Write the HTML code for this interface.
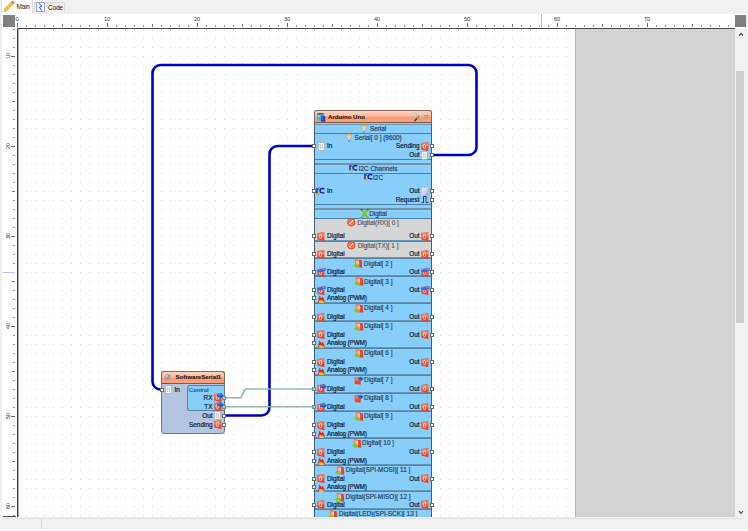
<!DOCTYPE html><html><head><meta charset="utf-8"><style>
html,body{margin:0;padding:0;width:748px;height:531px;overflow:hidden;background:#f0f0f0;font-family:"Liberation Sans",sans-serif;}
.a{position:absolute;}
.t{position:absolute;white-space:nowrap;line-height:10px;height:10px;-webkit-text-stroke:0.2px currentColor;}
svg{position:absolute;overflow:visible;}
</style></head><body>
<div class="a" style="left:2px;top:14px;width:744px;height:503px;background:#fff;"></div>
<div class="a" style="left:1px;top:0px;width:32px;height:14px;background:#fff;border-right:1px solid #dcdcdc;border-left:1px solid #e6e6e6;box-sizing:border-box;"></div>
<div class="a" style="left:34px;top:2px;width:31px;height:11px;background:#f0f0f0;border:1px solid #dcdcdc;border-bottom:none;box-sizing:border-box;"></div>
<div class="t" style="left:16.5px;top:1.5px;font-size:6.6px;color:#1a1a1a;letter-spacing:-0.25px;-webkit-text-stroke:0px currentColor;">Main</div>
<div class="t" style="left:48px;top:2.5px;font-size:6.6px;color:#1a1a1a;letter-spacing:-0.25px;-webkit-text-stroke:0px currentColor;">Code</div>
<svg style="left:3px;top:0px" width="12" height="12" viewBox="0 0 12 12"><path d="M1.2 9.2 L8.6 1.8 L10.6 3.8 L3.2 11.2 Z" fill="#f5c842" stroke="#c88a2a" stroke-width="0.7"/><path d="M8.6 1.8 L9.6 0.8 L11.6 2.8 L10.6 3.8 Z" fill="#e8806a" stroke="#c06050" stroke-width="0.5"/><path d="M1.2 9.2 L3.2 11.2 L0.6 11.8 Z" fill="#f3dcb8" stroke="#c8a070" stroke-width="0.4"/></svg>
<svg style="left:36px;top:2px" width="9" height="10" viewBox="0 0 9 10"><rect x="0.5" y="0.5" width="8" height="9" fill="#eef2fb" stroke="#8a9ab8" stroke-width="0.8"/><path d="M3 1.5 L6 4 L3.5 5 L5.5 8.5" fill="none" stroke="#3060d0" stroke-width="1"/></svg>
<div class="a" style="left:3px;top:15px;width:12px;height:12px;background:#808080;"></div>
<div class="a" style="left:735px;top:15px;width:11px;height:12px;background:#808080;"></div>
<svg style="left:0;top:0" width="748" height="531"><rect x="17" y="23" width="1" height="4" fill="#6a6a6a"/><rect x="26" y="25" width="1" height="2" fill="#999"/><rect x="35" y="25" width="1" height="2" fill="#999"/><rect x="44" y="25" width="1" height="2" fill="#999"/><rect x="53" y="25" width="1" height="2" fill="#999"/><rect x="62" y="24" width="1" height="3" fill="#7a7a7a"/><rect x="71" y="25" width="1" height="2" fill="#999"/><rect x="80" y="25" width="1" height="2" fill="#999"/><rect x="89" y="25" width="1" height="2" fill="#999"/><rect x="98" y="25" width="1" height="2" fill="#999"/><rect x="107" y="23" width="1" height="4" fill="#6a6a6a"/><rect x="116" y="25" width="1" height="2" fill="#999"/><rect x="125" y="25" width="1" height="2" fill="#999"/><rect x="134" y="25" width="1" height="2" fill="#999"/><rect x="143" y="25" width="1" height="2" fill="#999"/><rect x="152" y="24" width="1" height="3" fill="#7a7a7a"/><rect x="161" y="25" width="1" height="2" fill="#999"/><rect x="170" y="25" width="1" height="2" fill="#999"/><rect x="179" y="25" width="1" height="2" fill="#999"/><rect x="188" y="25" width="1" height="2" fill="#999"/><rect x="197" y="23" width="1" height="4" fill="#6a6a6a"/><rect x="206" y="25" width="1" height="2" fill="#999"/><rect x="215" y="25" width="1" height="2" fill="#999"/><rect x="224" y="25" width="1" height="2" fill="#999"/><rect x="233" y="25" width="1" height="2" fill="#999"/><rect x="242" y="24" width="1" height="3" fill="#7a7a7a"/><rect x="251" y="25" width="1" height="2" fill="#999"/><rect x="260" y="25" width="1" height="2" fill="#999"/><rect x="269" y="25" width="1" height="2" fill="#999"/><rect x="278" y="25" width="1" height="2" fill="#999"/><rect x="287" y="23" width="1" height="4" fill="#6a6a6a"/><rect x="296" y="25" width="1" height="2" fill="#999"/><rect x="305" y="25" width="1" height="2" fill="#999"/><rect x="314" y="25" width="1" height="2" fill="#999"/><rect x="323" y="25" width="1" height="2" fill="#999"/><rect x="332" y="24" width="1" height="3" fill="#7a7a7a"/><rect x="341" y="25" width="1" height="2" fill="#999"/><rect x="350" y="25" width="1" height="2" fill="#999"/><rect x="359" y="25" width="1" height="2" fill="#999"/><rect x="368" y="25" width="1" height="2" fill="#999"/><rect x="377" y="23" width="1" height="4" fill="#6a6a6a"/><rect x="386" y="25" width="1" height="2" fill="#999"/><rect x="395" y="25" width="1" height="2" fill="#999"/><rect x="404" y="25" width="1" height="2" fill="#999"/><rect x="413" y="25" width="1" height="2" fill="#999"/><rect x="422" y="24" width="1" height="3" fill="#7a7a7a"/><rect x="431" y="25" width="1" height="2" fill="#999"/><rect x="440" y="25" width="1" height="2" fill="#999"/><rect x="449" y="25" width="1" height="2" fill="#999"/><rect x="458" y="25" width="1" height="2" fill="#999"/><rect x="467" y="23" width="1" height="4" fill="#6a6a6a"/><rect x="476" y="25" width="1" height="2" fill="#999"/><rect x="485" y="25" width="1" height="2" fill="#999"/><rect x="494" y="25" width="1" height="2" fill="#999"/><rect x="503" y="25" width="1" height="2" fill="#999"/><rect x="512" y="24" width="1" height="3" fill="#7a7a7a"/><rect x="521" y="25" width="1" height="2" fill="#999"/><rect x="530" y="25" width="1" height="2" fill="#999"/><rect x="539" y="25" width="1" height="2" fill="#999"/><rect x="548" y="25" width="1" height="2" fill="#999"/><rect x="557" y="23" width="1" height="4" fill="#6a6a6a"/><rect x="566" y="25" width="1" height="2" fill="#999"/><rect x="575" y="25" width="1" height="2" fill="#999"/><rect x="584" y="25" width="1" height="2" fill="#999"/><rect x="593" y="25" width="1" height="2" fill="#999"/><rect x="602" y="24" width="1" height="3" fill="#7a7a7a"/><rect x="611" y="25" width="1" height="2" fill="#999"/><rect x="620" y="25" width="1" height="2" fill="#999"/><rect x="629" y="25" width="1" height="2" fill="#999"/><rect x="638" y="25" width="1" height="2" fill="#999"/><rect x="647" y="23" width="1" height="4" fill="#6a6a6a"/><rect x="656" y="25" width="1" height="2" fill="#999"/><rect x="665" y="25" width="1" height="2" fill="#999"/><rect x="674" y="25" width="1" height="2" fill="#999"/><rect x="683" y="25" width="1" height="2" fill="#999"/><rect x="692" y="24" width="1" height="3" fill="#7a7a7a"/><rect x="701" y="25" width="1" height="2" fill="#999"/><rect x="710" y="25" width="1" height="2" fill="#999"/><rect x="719" y="25" width="1" height="2" fill="#999"/><rect x="728" y="25" width="1" height="2" fill="#999"/><rect x="13" y="29" width="2" height="1" fill="#999"/><rect x="13" y="38" width="2" height="1" fill="#999"/><rect x="13" y="47" width="2" height="1" fill="#999"/><rect x="11" y="56" width="4" height="1" fill="#6a6a6a"/><rect x="13" y="65" width="2" height="1" fill="#999"/><rect x="13" y="74" width="2" height="1" fill="#999"/><rect x="13" y="83" width="2" height="1" fill="#999"/><rect x="13" y="92" width="2" height="1" fill="#999"/><rect x="12" y="101" width="3" height="1" fill="#7a7a7a"/><rect x="13" y="110" width="2" height="1" fill="#999"/><rect x="13" y="119" width="2" height="1" fill="#999"/><rect x="13" y="128" width="2" height="1" fill="#999"/><rect x="13" y="137" width="2" height="1" fill="#999"/><rect x="11" y="146" width="4" height="1" fill="#6a6a6a"/><rect x="13" y="155" width="2" height="1" fill="#999"/><rect x="13" y="164" width="2" height="1" fill="#999"/><rect x="13" y="173" width="2" height="1" fill="#999"/><rect x="13" y="182" width="2" height="1" fill="#999"/><rect x="12" y="191" width="3" height="1" fill="#7a7a7a"/><rect x="13" y="200" width="2" height="1" fill="#999"/><rect x="13" y="209" width="2" height="1" fill="#999"/><rect x="13" y="218" width="2" height="1" fill="#999"/><rect x="13" y="227" width="2" height="1" fill="#999"/><rect x="11" y="236" width="4" height="1" fill="#6a6a6a"/><rect x="13" y="245" width="2" height="1" fill="#999"/><rect x="13" y="254" width="2" height="1" fill="#999"/><rect x="13" y="263" width="2" height="1" fill="#999"/><rect x="13" y="272" width="2" height="1" fill="#999"/><rect x="12" y="281" width="3" height="1" fill="#7a7a7a"/><rect x="13" y="290" width="2" height="1" fill="#999"/><rect x="13" y="299" width="2" height="1" fill="#999"/><rect x="13" y="308" width="2" height="1" fill="#999"/><rect x="13" y="317" width="2" height="1" fill="#999"/><rect x="11" y="326" width="4" height="1" fill="#6a6a6a"/><rect x="13" y="335" width="2" height="1" fill="#999"/><rect x="13" y="344" width="2" height="1" fill="#999"/><rect x="13" y="353" width="2" height="1" fill="#999"/><rect x="13" y="362" width="2" height="1" fill="#999"/><rect x="12" y="371" width="3" height="1" fill="#7a7a7a"/><rect x="13" y="380" width="2" height="1" fill="#999"/><rect x="13" y="389" width="2" height="1" fill="#999"/><rect x="13" y="398" width="2" height="1" fill="#999"/><rect x="13" y="407" width="2" height="1" fill="#999"/><rect x="11" y="416" width="4" height="1" fill="#6a6a6a"/><rect x="13" y="425" width="2" height="1" fill="#999"/><rect x="13" y="434" width="2" height="1" fill="#999"/><rect x="13" y="443" width="2" height="1" fill="#999"/><rect x="13" y="452" width="2" height="1" fill="#999"/><rect x="12" y="461" width="3" height="1" fill="#7a7a7a"/><rect x="13" y="470" width="2" height="1" fill="#999"/><rect x="13" y="479" width="2" height="1" fill="#999"/><rect x="13" y="488" width="2" height="1" fill="#999"/><rect x="13" y="497" width="2" height="1" fill="#999"/><rect x="11" y="506" width="4" height="1" fill="#6a6a6a"/><rect x="13" y="515" width="2" height="1" fill="#999"/></svg>
<div class="t" style="left:17px;transform:translateX(-50%);top:14.0px;font-size:5.5px;color:#333;-webkit-text-stroke:0px currentColor;">0</div>
<div class="t" style="left:107px;transform:translateX(-50%);top:14.0px;font-size:5.5px;color:#333;-webkit-text-stroke:0px currentColor;">10</div>
<div class="t" style="left:197px;transform:translateX(-50%);top:14.0px;font-size:5.5px;color:#333;-webkit-text-stroke:0px currentColor;">20</div>
<div class="t" style="left:287px;transform:translateX(-50%);top:14.0px;font-size:5.5px;color:#333;-webkit-text-stroke:0px currentColor;">30</div>
<div class="t" style="left:377px;transform:translateX(-50%);top:14.0px;font-size:5.5px;color:#333;-webkit-text-stroke:0px currentColor;">40</div>
<div class="t" style="left:467px;transform:translateX(-50%);top:14.0px;font-size:5.5px;color:#333;-webkit-text-stroke:0px currentColor;">50</div>
<div class="t" style="left:557px;transform:translateX(-50%);top:14.0px;font-size:5.5px;color:#333;-webkit-text-stroke:0px currentColor;">60</div>
<div class="t" style="left:647px;transform:translateX(-50%);top:14.0px;font-size:5.5px;color:#333;-webkit-text-stroke:0px currentColor;">70</div>
<div class="t" style="left:2.5px;top:51px;width:10px;text-align:center;font-size:5.5px;color:#333;transform:rotate(-90deg);-webkit-text-stroke:0;">10</div>
<div class="t" style="left:2.5px;top:141px;width:10px;text-align:center;font-size:5.5px;color:#333;transform:rotate(-90deg);-webkit-text-stroke:0;">20</div>
<div class="t" style="left:2.5px;top:231px;width:10px;text-align:center;font-size:5.5px;color:#333;transform:rotate(-90deg);-webkit-text-stroke:0;">30</div>
<div class="t" style="left:2.5px;top:321px;width:10px;text-align:center;font-size:5.5px;color:#333;transform:rotate(-90deg);-webkit-text-stroke:0;">40</div>
<div class="t" style="left:2.5px;top:411px;width:10px;text-align:center;font-size:5.5px;color:#333;transform:rotate(-90deg);-webkit-text-stroke:0;">50</div>
<div class="t" style="left:2.5px;top:501px;width:10px;text-align:center;font-size:5.5px;color:#333;transform:rotate(-90deg);-webkit-text-stroke:0;">60</div>
<div class="a" style="left:541px;top:14px;width:1px;height:14px;background:#f0a0a8;"></div>
<div class="a" style="left:3px;top:272px;width:12px;height:1px;background:#c0c0f0;"></div>
<div class="a" style="left:17px;top:28px;width:718px;height:1px;background:#4a4a4a;"></div>
<div class="a" style="left:17px;top:28px;width:1px;height:489px;background:#404040;"></div>
<div class="a" style="left:18px;top:29px;width:1px;height:488px;background:#a8a8a8;"></div>
<div class="a" style="left:3px;top:516px;width:13px;height:1px;background:#505050;"></div>
<svg style="left:18px;top:29px" width="557" height="488"><defs><pattern id="gd" width="9" height="9" patternUnits="userSpaceOnUse" x="8" y="0"><rect x="0" y="0" width="1" height="1" fill="#d6d6d6"/></pattern></defs><rect x="0" y="0" width="557" height="488" fill="url(#gd)"/></svg>
<div class="a" style="left:575px;top:29px;width:160px;height:488px;background:#d3d3d3;border-left:1px solid #b4b4b4;box-sizing:border-box;"></div>
<div class="a" style="left:735px;top:29px;width:11px;height:488px;background:#f0f0f0;"></div>
<div class="a" style="left:736px;top:71px;width:8px;height:252px;background:#cdcdcd;"></div>
<svg style="left:737.5px;top:32px" width="6" height="5" viewBox="0 0 6 5"><path d="M1 3.6 L3 1.4 L5 3.6" fill="none" stroke="#505050" stroke-width="1.1"/></svg>
<div class="a" style="left:745px;top:29px;width:1px;height:488px;background:#fafafa;"></div>
<svg style="left:737.5px;top:510px" width="6" height="5" viewBox="0 0 6 5"><path d="M1 1.2 L3 3.4 L5 1.2" fill="none" stroke="#505050" stroke-width="1.1"/></svg>
<svg style="left:0;top:0" width="748" height="531"><path d="M432 155 H468.5 A8 8 0 0 0 476.5 147 V73 A8 8 0 0 0 468.5 65 H160.5 A8 8 0 0 0 152.5 73 V381.5 A8 8 0 0 0 160.5 389.5 H162" fill="none" stroke="#0000c8" stroke-width="2.6"/><path d="M225 415.5 H261.5 A8 8 0 0 0 269.5 407.5 V154 A8 8 0 0 1 277.5 146 H314" fill="none" stroke="#0000c8" stroke-width="2.6"/><path d="M225 397.8 H239.5 C243.5 397.8 242.5 389 246.5 389 H314" fill="none" stroke="#88b4ac" stroke-width="1.6" stroke-opacity="0.95"/><path d="M225 406.8 H314" fill="none" stroke="#88b4ac" stroke-width="1.6" stroke-opacity="0.95"/></svg>
<div class="a" style="left:314px;top:122px;width:118px;height:400px;background:#87cefa;border-left:1px solid #465e72;border-right:1px solid #465e72;box-sizing:border-box;"></div>
<div class="a" style="left:314px;top:110px;width:118px;height:13px;background:linear-gradient(#fcd2bf 0%,#fbbfa4 40%,#f89c76 60%,#f7a27c 100%);border:1px solid #86685c;border-bottom:1px solid #7a5a4c;border-radius:3px 3px 0 0;box-sizing:border-box;"></div>
<div class="a" style="left:315px;top:124px;width:116px;height:1px;background:#6f98b8;"></div>
<div class="a" style="left:315px;top:133px;width:116px;height:1px;background:#4d82a8;"></div>
<div class="a" style="left:315px;top:159px;width:116px;height:1px;background:#4d82a8;"></div>
<div class="a" style="left:315px;top:173px;width:116px;height:1px;background:#4d82a8;"></div>
<div class="a" style="left:315px;top:204px;width:116px;height:1px;background:#4d82a8;"></div>
<div class="a" style="left:315px;top:218px;width:116px;height:1px;background:#4d82a8;"></div>
<div class="a" style="left:315px;top:163px;width:116px;height:2px;background:#7593a8;"></div>
<div class="a" style="left:315px;top:208px;width:116px;height:2px;background:#7593a8;"></div>
<div class="a" style="left:315px;top:219px;width:116px;height:21px;background:#d5d5d5;"></div>
<div class="a" style="left:315px;top:242px;width:116px;height:15.5px;background:#d5d5d5;"></div>
<div class="a" style="left:315px;top:240.10000000000002px;width:116px;height:2.2px;background:linear-gradient(#6e9cbd,#4f7d9e);"></div>
<div class="a" style="left:315px;top:257.1px;width:116px;height:2.2px;background:linear-gradient(#6e9cbd,#4f7d9e);"></div>
<div class="a" style="left:315px;top:275.1px;width:116px;height:2.2px;background:linear-gradient(#6e9cbd,#4f7d9e);"></div>
<div class="a" style="left:315px;top:301.8px;width:116px;height:2.2px;background:linear-gradient(#6e9cbd,#4f7d9e);"></div>
<div class="a" style="left:315px;top:320.3px;width:116px;height:2.2px;background:linear-gradient(#6e9cbd,#4f7d9e);"></div>
<div class="a" style="left:315px;top:347.1px;width:116px;height:2.2px;background:linear-gradient(#6e9cbd,#4f7d9e);"></div>
<div class="a" style="left:315px;top:373.90000000000003px;width:116px;height:2.2px;background:linear-gradient(#6e9cbd,#4f7d9e);"></div>
<div class="a" style="left:315px;top:392.2px;width:116px;height:2.2px;background:linear-gradient(#6e9cbd,#4f7d9e);"></div>
<div class="a" style="left:315px;top:410.3px;width:116px;height:2.2px;background:linear-gradient(#6e9cbd,#4f7d9e);"></div>
<div class="a" style="left:315px;top:437.0px;width:116px;height:2.2px;background:linear-gradient(#6e9cbd,#4f7d9e);"></div>
<div class="a" style="left:315px;top:463.90000000000003px;width:116px;height:2.2px;background:linear-gradient(#6e9cbd,#4f7d9e);"></div>
<div class="a" style="left:315px;top:490.2px;width:116px;height:2.2px;background:linear-gradient(#6e9cbd,#4f7d9e);"></div>
<div class="a" style="left:315px;top:508.1px;width:116px;height:2.2px;background:linear-gradient(#6e9cbd,#4f7d9e);"></div>
<svg style="left:316px;top:112px" width="10" height="10" viewBox="0 0 10 10"><path d="M0.8 3 C0.8 1.2 2 0.8 4.5 0.8 C7 0.8 8.2 1.2 8.2 3 V6 C8.2 8.5 6 9 4.5 9 C2.5 9 0.8 8.4 0.8 6 Z" fill="#48b8b8"/><path d="M1 2.5 C1 1.2 2.2 1 4.5 1 C7 1 8 1.2 8 2.5 Z" fill="#3a7080"/><path d="M1.6 4 Q3 3.2 4 5" stroke="#a8f0f0" stroke-width="1" fill="none"/><rect x="5.2" y="4.2" width="4" height="5.5" fill="#2a30b8"/><path d="M6.2 5 L7.2 8.5" stroke="#8090ff" stroke-width="0.8"/></svg>
<div class="t" style="left:328px;top:111.5px;font-size:6.1px;color:#2e140a;font-weight:bold;-webkit-text-stroke:0.12px currentColor;">Arduino Uno</div>
<svg style="left:413px;top:111.5px" width="10" height="10" viewBox="0 0 10 10"><path d="M2 8.5 L5.2 5" stroke="#7a3a18" stroke-width="1.8" stroke-linecap="round"/><path d="M4.6 5.6 L8.2 8.4" stroke="#90b8b0" stroke-width="1.8" stroke-linecap="round"/><circle cx="2.6" cy="2.6" r="1.8" fill="none" stroke="#c8d0d0" stroke-width="1.2"/><path d="M3.6 3.6 L5 5" stroke="#b0a090" stroke-width="1"/><circle cx="7.2" cy="2" r="1.3" fill="none" stroke="#d8dcdc" stroke-width="0.9"/><path d="M6.4 2.8 L5 4.4" stroke="#a09088" stroke-width="0.9"/></svg>
<svg style="left:424px;top:114.5px" width="5" height="4" viewBox="0 0 5 4"><path d="M0.6 0.6 L4.4 0.6 L2.5 3.2 Z" fill="#e8d8d0" stroke="#8a8078" stroke-width="0.7"/></svg>
<svg style="left:360.40000000000003px;top:124.0px" width="8" height="9" viewBox="0 0 8 9"><path d="M0.8 1.8 L7.2 1.8 L4.2 8.2 L3.8 8.2 Z" fill="#dcd4dc" stroke="#98a0a8" stroke-width="0.5"/><path d="M4 7 L4 9" stroke="#606870" stroke-width="0.8"/><ellipse cx="4" cy="1.6" rx="2.6" ry="1.1" fill="#ecc848"/><path d="M1.6 1 Q4 -0.2 6.4 1" stroke="#8a5a28" stroke-width="0.6" fill="none"/></svg>
<div class="t" style="left:369.90000000000003px;top:123.5px;font-size:6.4px;color:#1c3a5c;-webkit-text-stroke:0.15px currentColor;">Serial</div>
<svg style="left:344.95px;top:133.0px" width="8" height="9" viewBox="0 0 8 9"><path d="M0.8 1.8 L7.2 1.8 L4.2 8.2 L3.8 8.2 Z" fill="#dcd4dc" stroke="#98a0a8" stroke-width="0.5"/><path d="M4 7 L4 9" stroke="#606870" stroke-width="0.8"/><ellipse cx="4" cy="1.6" rx="2.6" ry="1.1" fill="#ecc848"/><path d="M1.6 1 Q4 -0.2 6.4 1" stroke="#8a5a28" stroke-width="0.6" fill="none"/></svg>
<div class="t" style="left:354.45px;top:132.5px;font-size:6.4px;color:#1c3a5c;-webkit-text-stroke:0.15px currentColor;">Serial[ 0 ] (9600)</div>
<svg style="left:349.2px;top:164.0px" width="9" height="9" viewBox="0 0 9 9"><rect x="0.3" y="1" width="1.4" height="5.5" fill="#1c1ca8"/><text x="1.6" y="3.4" font-family="Liberation Sans" font-weight="bold" font-size="3.6" fill="#3a3ad0">2</text><path d="M8.2 2.2 C7.5 1.2 4 1 4 3.8 C4 6.6 7.5 6.4 8.2 5.4" fill="none" stroke="#1c1ca8" stroke-width="1.5"/><path d="M1.2 6.2 C1.8 4.6 3.6 4.8 4.2 6 C4.6 7.2 3.6 8.6 2.4 8.4 C1.6 8.2 1 7.2 1.2 6.2 Z" fill="#d8b048"/><path d="M4.5 6.5 L6.5 7.5" stroke="#e8e0f0" stroke-width="0.8"/></svg>
<div class="t" style="left:358.7px;top:163.5px;font-size:6.4px;color:#1c3a5c;-webkit-text-stroke:0.15px currentColor;">I2C Channels</div>
<svg style="left:363.55px;top:173.0px" width="9" height="9" viewBox="0 0 9 9"><rect x="0.3" y="1" width="1.4" height="5.5" fill="#1c1ca8"/><text x="1.6" y="3.4" font-family="Liberation Sans" font-weight="bold" font-size="3.6" fill="#3a3ad0">2</text><path d="M8.2 2.2 C7.5 1.2 4 1 4 3.8 C4 6.6 7.5 6.4 8.2 5.4" fill="none" stroke="#1c1ca8" stroke-width="1.5"/><path d="M1.2 6.2 C1.8 4.6 3.6 4.8 4.2 6 C4.6 7.2 3.6 8.6 2.4 8.4 C1.6 8.2 1 7.2 1.2 6.2 Z" fill="#d8b048"/><path d="M4.5 6.5 L6.5 7.5" stroke="#e8e0f0" stroke-width="0.8"/></svg>
<div class="t" style="left:373.05px;top:172.5px;font-size:6.4px;color:#1c3a5c;-webkit-text-stroke:0.15px currentColor;">I2C</div>
<svg style="left:359.65000000000003px;top:209.0px" width="10" height="10" viewBox="0 0 10 10"><path d="M1.4 1 C5.2 3.2 5.2 6.2 1.4 8.5" stroke="#78c020" stroke-width="2" fill="none" stroke-linecap="round"/><path d="M8.2 1 C4.4 3.2 4.4 6.2 8.2 8.5" stroke="#78c020" stroke-width="2" fill="none" stroke-linecap="round"/><path d="M0.6 0.6 h2 M6.8 0.6 h2" stroke="#2a5a10" stroke-width="1"/><path d="M2 3 L2.6 4.5 M7.4 3 L6.8 4.5" stroke="#b8f060" stroke-width="0.6"/></svg>
<div class="t" style="left:369.15000000000003px;top:208.5px;font-size:6.4px;color:#1c3a5c;-webkit-text-stroke:0.15px currentColor;">Digital</div>
<div class="a" style="left:312px;top:144px;width:4px;height:4px;background:#fff;border:1px solid #6a6a6a;box-sizing:border-box;"></div>
<svg style="left:318px;top:141.5px" width="7" height="9" viewBox="0 0 7 9"><rect x="0.5" y="0.5" width="6" height="8" rx="0.8" fill="#f4f4ee" stroke="#a8aca8" stroke-width="0.8"/><path d="M2.6 2 V7 M4.4 2 V7" stroke="#b8b8b0" stroke-width="0.7"/></svg>
<div class="t" style="left:327px;top:141.0px;font-size:6.4px;color:#0e2236;letter-spacing:0px;">In</div>
<div class="a" style="left:430px;top:144px;width:4px;height:4px;background:#fff;border:1px solid #6a6a6a;box-sizing:border-box;"></div>
<svg style="left:420.5px;top:141.5px" width="9" height="9" viewBox="0 0 9 9"><path d="M0.2 0.9 L7.3 0.2 L7.4 9.2 L0.4 7.6 Z" fill="#e9462a"/><path d="M0.5 1.2 L7 0.6 L7 4.2 L0.6 4.6 Z" fill="#f77a5c"/><rect x="2.3" y="2.6" width="2.4" height="3.8" rx="1" fill="none" stroke="#fde0d0" stroke-width="0.9"/></svg>
<div class="t" style="right:328.5px;top:141.0px;font-size:6.4px;color:#0e2236;">Sending</div>
<div class="a" style="left:430px;top:153px;width:4px;height:4px;background:#fff;border:1px solid #6a6a6a;box-sizing:border-box;"></div>
<svg style="left:421px;top:150.5px" width="7" height="9" viewBox="0 0 7 9"><rect x="0.5" y="0.5" width="6" height="8" rx="0.8" fill="#f4f4ee" stroke="#a8aca8" stroke-width="0.8"/><path d="M2.6 2 V7 M4.4 2 V7" stroke="#b8b8b0" stroke-width="0.7"/></svg>
<div class="t" style="right:328.5px;top:150.0px;font-size:6.4px;color:#0e2236;">Out</div>
<div class="a" style="left:312px;top:189px;width:4px;height:4px;background:#fff;border:1px solid #6a6a6a;box-sizing:border-box;"></div>
<svg style="left:316px;top:186.5px" width="9" height="9" viewBox="0 0 9 9"><rect x="0.3" y="1" width="1.4" height="5.5" fill="#1c1ca8"/><text x="1.6" y="3.4" font-family="Liberation Sans" font-weight="bold" font-size="3.6" fill="#3a3ad0">2</text><path d="M8.2 2.2 C7.5 1.2 4 1 4 3.8 C4 6.6 7.5 6.4 8.2 5.4" fill="none" stroke="#1c1ca8" stroke-width="1.5"/><path d="M1.2 6.2 C1.8 4.6 3.6 4.8 4.2 6 C4.6 7.2 3.6 8.6 2.4 8.4 C1.6 8.2 1 7.2 1.2 6.2 Z" fill="#d8b048"/><path d="M4.5 6.5 L6.5 7.5" stroke="#e8e0f0" stroke-width="0.8"/></svg>
<div class="t" style="left:327px;top:186.0px;font-size:6.4px;color:#0e2236;letter-spacing:0px;">In</div>
<div class="a" style="left:430px;top:189px;width:4px;height:4px;background:#fff;border:1px solid #6a6a6a;box-sizing:border-box;"></div>
<svg style="left:421px;top:186.5px" width="8" height="9" viewBox="0 0 8 9"><defs><linearGradient id="og" x1="0" y1="0" x2="1" y2="1"><stop offset="0" stop-color="#f4f6f8"/><stop offset="0.6" stop-color="#c8d4e0"/><stop offset="1" stop-color="#7a9ac0"/></linearGradient></defs><rect x="0.3" y="0.3" width="7" height="8" fill="url(#og)" stroke="#b0bcc8" stroke-width="0.5"/></svg>
<div class="t" style="right:328.5px;top:186.0px;font-size:6.4px;color:#0e2236;">Out</div>
<div class="a" style="left:430px;top:197.5px;width:4px;height:4px;background:#fff;border:1px solid #6a6a6a;box-sizing:border-box;"></div>
<svg style="left:421px;top:195.0px" width="8" height="9" viewBox="0 0 8 9"><path d="M0.5 7.5 H2.5 V1.5 H5 V7.5 H7.5" fill="none" stroke="#203040" stroke-width="0.9"/></svg>
<div class="t" style="right:328.5px;top:194.5px;font-size:6.4px;color:#0e2236;">Request</div>
<svg style="left:346.75px;top:218.0px" width="9" height="9" viewBox="0 0 9 9"><circle cx="4.3" cy="4.3" r="4.1" fill="#e4502e"/><circle cx="4.3" cy="4.3" r="2.4" fill="none" stroke="#f8b8a0" stroke-width="0.7"/><path d="M2.4 6.2 L6.2 2.4" stroke="#fff0e8" stroke-width="1.1"/></svg>
<div class="t" style="left:357.25px;top:217.5px;font-size:6.4px;color:#50555c;-webkit-text-stroke:0.15px currentColor;">Digital(RX)[ 0 ]</div>
<div class="a" style="left:312px;top:234px;width:4px;height:4px;background:#fff;border:1px solid #6a6a6a;box-sizing:border-box;"></div>
<svg style="left:317px;top:231.5px" width="9" height="9" viewBox="0 0 9 9"><path d="M0.2 0.9 L7.3 0.2 L7.4 9.2 L0.4 7.6 Z" fill="#e9462a"/><path d="M0.5 1.2 L7 0.6 L7 4.2 L0.6 4.6 Z" fill="#f77a5c"/><rect x="2.3" y="2.6" width="2.4" height="3.8" rx="1" fill="none" stroke="#fde0d0" stroke-width="0.9"/></svg>
<div class="t" style="left:327px;top:231.0px;font-size:6.4px;color:#0e2236;letter-spacing:0px;">Digital</div>
<div class="a" style="left:430px;top:234px;width:4px;height:4px;background:#fff;border:1px solid #6a6a6a;box-sizing:border-box;"></div>
<svg style="left:420.5px;top:231.5px" width="9" height="9" viewBox="0 0 9 9"><path d="M0.2 0.9 L7.3 0.2 L7.4 9.2 L0.4 7.6 Z" fill="#e9462a"/><path d="M0.5 1.2 L7 0.6 L7 4.2 L0.6 4.6 Z" fill="#f77a5c"/><rect x="2.3" y="2.6" width="2.4" height="3.8" rx="1" fill="none" stroke="#fde0d0" stroke-width="0.9"/></svg>
<div class="t" style="right:328.5px;top:231.0px;font-size:6.4px;color:#0e2236;">Out</div>
<svg style="left:347.15000000000003px;top:241.0px" width="9" height="9" viewBox="0 0 9 9"><circle cx="4.3" cy="4.3" r="4.1" fill="#e4502e"/><circle cx="4.3" cy="4.3" r="2.4" fill="none" stroke="#f8b8a0" stroke-width="0.7"/><path d="M2.4 6.2 L6.2 2.4" stroke="#fff0e8" stroke-width="1.1"/></svg>
<div class="t" style="left:357.65000000000003px;top:240.5px;font-size:6.4px;color:#50555c;-webkit-text-stroke:0.15px currentColor;">Digital(TX)[ 1 ]</div>
<div class="a" style="left:312px;top:252px;width:4px;height:4px;background:#fff;border:1px solid #6a6a6a;box-sizing:border-box;"></div>
<svg style="left:317px;top:249.5px" width="9" height="9" viewBox="0 0 9 9"><path d="M0.2 0.9 L7.3 0.2 L7.4 9.2 L0.4 7.6 Z" fill="#e9462a"/><path d="M0.5 1.2 L7 0.6 L7 4.2 L0.6 4.6 Z" fill="#f77a5c"/><rect x="2.3" y="2.6" width="2.4" height="3.8" rx="1" fill="none" stroke="#fde0d0" stroke-width="0.9"/></svg>
<div class="t" style="left:327px;top:249.0px;font-size:6.4px;color:#0e2236;letter-spacing:0px;">Digital</div>
<div class="a" style="left:430px;top:252px;width:4px;height:4px;background:#fff;border:1px solid #6a6a6a;box-sizing:border-box;"></div>
<svg style="left:420.5px;top:249.5px" width="9" height="9" viewBox="0 0 9 9"><path d="M0.2 0.9 L7.3 0.2 L7.4 9.2 L0.4 7.6 Z" fill="#e9462a"/><path d="M0.5 1.2 L7 0.6 L7 4.2 L0.6 4.6 Z" fill="#f77a5c"/><rect x="2.3" y="2.6" width="2.4" height="3.8" rx="1" fill="none" stroke="#fde0d0" stroke-width="0.9"/></svg>
<div class="t" style="right:328.5px;top:249.0px;font-size:6.4px;color:#0e2236;">Out</div>
<svg style="left:353.35px;top:259.0px" width="10" height="9" viewBox="0 0 10 9"><path d="M1.8 0.3 L8.8 1.2 L9.2 8.8 L2.2 8 Z" fill="#e8402a"/><path d="M2 0.6 L6 1.2 L6.2 7.5 L2.2 7 Z" fill="#f58a78"/><path d="M4 2.5 h1.6 v3.6 h-1.6 z" fill="none" stroke="#fde0d8" stroke-width="0.8"/><path d="M0 6.6 L2.6 4.2 L2.8 5.3 L5.6 5.1 L5.8 7.9 L2.9 8.1 L3 9 Z" fill="#7ccc1c"/></svg>
<div class="t" style="left:363.85px;top:258.5px;font-size:6.4px;color:#1c3a5c;-webkit-text-stroke:0.15px currentColor;">Digital[ 2 ]</div>
<div class="a" style="left:312px;top:270px;width:4px;height:4px;background:#fff;border:1px solid #6a6a6a;box-sizing:border-box;"></div>
<svg style="left:317px;top:267.5px" width="9" height="9" viewBox="0 0 9 9"><path d="M0.2 0.9 L7.3 0.2 L7.4 9.2 L0.4 7.6 Z" fill="#e9462a"/><path d="M0.5 1.2 L7 0.6 L7 4.2 L0.6 4.6 Z" fill="#f77a5c"/><rect x="2.3" y="2.6" width="2.4" height="3.8" rx="1" fill="none" stroke="#fde0d0" stroke-width="0.9"/><path d="M0.2 2.2 L5 0.8 L8.6 -0.2 L8.8 2.6 L4.5 4.2 L0.6 4.6 Z" fill="#3a68e0"/><path d="M5 0.9 L8.2 0.1 L8.3 1.4 L5.2 2.2 Z" fill="#6a98f8"/></svg>
<div class="t" style="left:327px;top:267.0px;font-size:6.4px;color:#0e2236;letter-spacing:0px;">Digital</div>
<div class="a" style="left:430px;top:270px;width:4px;height:4px;background:#fff;border:1px solid #6a6a6a;box-sizing:border-box;"></div>
<svg style="left:420.5px;top:267.5px" width="9" height="9" viewBox="0 0 9 9"><path d="M0.2 0.9 L7.3 0.2 L7.4 9.2 L0.4 7.6 Z" fill="#e9462a"/><path d="M0.5 1.2 L7 0.6 L7 4.2 L0.6 4.6 Z" fill="#f77a5c"/><rect x="2.3" y="2.6" width="2.4" height="3.8" rx="1" fill="none" stroke="#fde0d0" stroke-width="0.9"/><path d="M0.2 2.2 L5 0.8 L8.6 -0.2 L8.8 2.6 L4.5 4.2 L0.6 4.6 Z" fill="#3a68e0"/><path d="M5 0.9 L8.2 0.1 L8.3 1.4 L5.2 2.2 Z" fill="#6a98f8"/></svg>
<div class="t" style="right:328.5px;top:267.0px;font-size:6.4px;color:#0e2236;">Out</div>
<svg style="left:353.55px;top:277.0px" width="10" height="9" viewBox="0 0 10 9"><path d="M1.8 0.3 L8.8 1.2 L9.2 8.8 L2.2 8 Z" fill="#e8402a"/><path d="M2 0.6 L6 1.2 L6.2 7.5 L2.2 7 Z" fill="#f58a78"/><path d="M4 2.5 h1.6 v3.6 h-1.6 z" fill="none" stroke="#fde0d8" stroke-width="0.8"/><path d="M0 6.6 L2.6 4.2 L2.8 5.3 L5.6 5.1 L5.8 7.9 L2.9 8.1 L3 9 Z" fill="#7ccc1c"/></svg>
<div class="t" style="left:364.05px;top:276.5px;font-size:6.4px;color:#1c3a5c;-webkit-text-stroke:0.15px currentColor;">Digital[ 3 ]</div>
<div class="a" style="left:312px;top:288px;width:4px;height:4px;background:#fff;border:1px solid #6a6a6a;box-sizing:border-box;"></div>
<svg style="left:317px;top:285.5px" width="9" height="9" viewBox="0 0 9 9"><path d="M0.2 0.9 L7.3 0.2 L7.4 9.2 L0.4 7.6 Z" fill="#e9462a"/><path d="M0.5 1.2 L7 0.6 L7 4.2 L0.6 4.6 Z" fill="#f77a5c"/><rect x="2.3" y="2.6" width="2.4" height="3.8" rx="1" fill="none" stroke="#fde0d0" stroke-width="0.9"/><path d="M0.2 2.2 L5 0.8 L8.6 -0.2 L8.8 2.6 L4.5 4.2 L0.6 4.6 Z" fill="#3a68e0"/><path d="M5 0.9 L8.2 0.1 L8.3 1.4 L5.2 2.2 Z" fill="#6a98f8"/></svg>
<div class="t" style="left:327px;top:285.0px;font-size:6.4px;color:#0e2236;letter-spacing:0px;">Digital</div>
<div class="a" style="left:430px;top:288px;width:4px;height:4px;background:#fff;border:1px solid #6a6a6a;box-sizing:border-box;"></div>
<svg style="left:420.5px;top:285.5px" width="9" height="9" viewBox="0 0 9 9"><path d="M0.2 0.9 L7.3 0.2 L7.4 9.2 L0.4 7.6 Z" fill="#e9462a"/><path d="M0.5 1.2 L7 0.6 L7 4.2 L0.6 4.6 Z" fill="#f77a5c"/><rect x="2.3" y="2.6" width="2.4" height="3.8" rx="1" fill="none" stroke="#fde0d0" stroke-width="0.9"/><path d="M0.2 2.2 L5 0.8 L8.6 -0.2 L8.8 2.6 L4.5 4.2 L0.6 4.6 Z" fill="#3a68e0"/><path d="M5 0.9 L8.2 0.1 L8.3 1.4 L5.2 2.2 Z" fill="#6a98f8"/></svg>
<div class="t" style="right:328.5px;top:285.0px;font-size:6.4px;color:#0e2236;">Out</div>
<div class="a" style="left:312px;top:296.3px;width:4px;height:4px;background:#fff;border:1px solid #6a6a6a;box-sizing:border-box;"></div>
<svg style="left:318px;top:294.8px" width="8" height="8" viewBox="0 0 8 8"><path d="M0.3 7.5 C0 5 1 2.5 1.5 0.3 C2.5 2 3 3 3.6 3.2 C4 2.4 4.3 2 4.8 1.8 C5.2 3 6.5 4 6.8 7.5 Z" fill="#e8281a"/><path d="M0.6 7.5 C0.8 6 1.4 5 2 4.4 C2.8 5.2 3.4 5.5 4 5 C4.8 5.5 6 6 6.5 7.5 Z" fill="#f8a020"/><path d="M1.2 7.8 C1.6 6.8 2.4 6.4 3.4 6.6 C4.4 6.4 5.4 6.8 6 7.8 Z" fill="#fde050"/></svg>
<div class="t" style="left:327px;top:293.3px;font-size:6.4px;color:#0e2236;letter-spacing:-0.15px;">Analog (PWM)</div>
<svg style="left:353.55px;top:303.5px" width="10" height="9" viewBox="0 0 10 9"><path d="M1.8 0.3 L8.8 1.2 L9.2 8.8 L2.2 8 Z" fill="#e8402a"/><path d="M2 0.6 L6 1.2 L6.2 7.5 L2.2 7 Z" fill="#f58a78"/><path d="M4 2.5 h1.6 v3.6 h-1.6 z" fill="none" stroke="#fde0d8" stroke-width="0.8"/><path d="M0 6.6 L2.6 4.2 L2.8 5.3 L5.6 5.1 L5.8 7.9 L2.9 8.1 L3 9 Z" fill="#7ccc1c"/></svg>
<div class="t" style="left:364.05px;top:303.0px;font-size:6.4px;color:#1c3a5c;-webkit-text-stroke:0.15px currentColor;">Digital[ 4 ]</div>
<div class="a" style="left:312px;top:315px;width:4px;height:4px;background:#fff;border:1px solid #6a6a6a;box-sizing:border-box;"></div>
<svg style="left:317px;top:312.5px" width="9" height="9" viewBox="0 0 9 9"><path d="M0.2 0.9 L7.3 0.2 L7.4 9.2 L0.4 7.6 Z" fill="#e9462a"/><path d="M0.5 1.2 L7 0.6 L7 4.2 L0.6 4.6 Z" fill="#f77a5c"/><rect x="2.3" y="2.6" width="2.4" height="3.8" rx="1" fill="none" stroke="#fde0d0" stroke-width="0.9"/></svg>
<div class="t" style="left:327px;top:312.0px;font-size:6.4px;color:#0e2236;letter-spacing:0px;">Digital</div>
<div class="a" style="left:430px;top:315px;width:4px;height:4px;background:#fff;border:1px solid #6a6a6a;box-sizing:border-box;"></div>
<svg style="left:420.5px;top:312.5px" width="9" height="9" viewBox="0 0 9 9"><path d="M0.2 0.9 L7.3 0.2 L7.4 9.2 L0.4 7.6 Z" fill="#e9462a"/><path d="M0.5 1.2 L7 0.6 L7 4.2 L0.6 4.6 Z" fill="#f77a5c"/><rect x="2.3" y="2.6" width="2.4" height="3.8" rx="1" fill="none" stroke="#fde0d0" stroke-width="0.9"/></svg>
<div class="t" style="right:328.5px;top:312.0px;font-size:6.4px;color:#0e2236;">Out</div>
<svg style="left:353.55px;top:321.5px" width="10" height="9" viewBox="0 0 10 9"><path d="M1.8 0.3 L8.8 1.2 L9.2 8.8 L2.2 8 Z" fill="#e8402a"/><path d="M2 0.6 L6 1.2 L6.2 7.5 L2.2 7 Z" fill="#f58a78"/><path d="M4 2.5 h1.6 v3.6 h-1.6 z" fill="none" stroke="#fde0d8" stroke-width="0.8"/><path d="M0 6.6 L2.6 4.2 L2.8 5.3 L5.6 5.1 L5.8 7.9 L2.9 8.1 L3 9 Z" fill="#7ccc1c"/></svg>
<div class="t" style="left:364.05px;top:321.0px;font-size:6.4px;color:#1c3a5c;-webkit-text-stroke:0.15px currentColor;">Digital[ 5 ]</div>
<div class="a" style="left:312px;top:332.6px;width:4px;height:4px;background:#fff;border:1px solid #6a6a6a;box-sizing:border-box;"></div>
<svg style="left:317px;top:330.1px" width="9" height="9" viewBox="0 0 9 9"><path d="M0.2 0.9 L7.3 0.2 L7.4 9.2 L0.4 7.6 Z" fill="#e9462a"/><path d="M0.5 1.2 L7 0.6 L7 4.2 L0.6 4.6 Z" fill="#f77a5c"/><rect x="2.3" y="2.6" width="2.4" height="3.8" rx="1" fill="none" stroke="#fde0d0" stroke-width="0.9"/></svg>
<div class="t" style="left:327px;top:329.6px;font-size:6.4px;color:#0e2236;letter-spacing:0px;">Digital</div>
<div class="a" style="left:430px;top:332.6px;width:4px;height:4px;background:#fff;border:1px solid #6a6a6a;box-sizing:border-box;"></div>
<svg style="left:420.5px;top:330.1px" width="9" height="9" viewBox="0 0 9 9"><path d="M0.2 0.9 L7.3 0.2 L7.4 9.2 L0.4 7.6 Z" fill="#e9462a"/><path d="M0.5 1.2 L7 0.6 L7 4.2 L0.6 4.6 Z" fill="#f77a5c"/><rect x="2.3" y="2.6" width="2.4" height="3.8" rx="1" fill="none" stroke="#fde0d0" stroke-width="0.9"/></svg>
<div class="t" style="right:328.5px;top:329.6px;font-size:6.4px;color:#0e2236;">Out</div>
<div class="a" style="left:312px;top:341.3px;width:4px;height:4px;background:#fff;border:1px solid #6a6a6a;box-sizing:border-box;"></div>
<svg style="left:318px;top:339.8px" width="8" height="8" viewBox="0 0 8 8"><path d="M0.3 7.5 C0 5 1 2.5 1.5 0.3 C2.5 2 3 3 3.6 3.2 C4 2.4 4.3 2 4.8 1.8 C5.2 3 6.5 4 6.8 7.5 Z" fill="#e8281a"/><path d="M0.6 7.5 C0.8 6 1.4 5 2 4.4 C2.8 5.2 3.4 5.5 4 5 C4.8 5.5 6 6 6.5 7.5 Z" fill="#f8a020"/><path d="M1.2 7.8 C1.6 6.8 2.4 6.4 3.4 6.6 C4.4 6.4 5.4 6.8 6 7.8 Z" fill="#fde050"/></svg>
<div class="t" style="left:327px;top:338.3px;font-size:6.4px;color:#0e2236;letter-spacing:-0.15px;">Analog (PWM)</div>
<svg style="left:353.55px;top:348.5px" width="10" height="9" viewBox="0 0 10 9"><path d="M1.8 0.3 L8.8 1.2 L9.2 8.8 L2.2 8 Z" fill="#e8402a"/><path d="M2 0.6 L6 1.2 L6.2 7.5 L2.2 7 Z" fill="#f58a78"/><path d="M4 2.5 h1.6 v3.6 h-1.6 z" fill="none" stroke="#fde0d8" stroke-width="0.8"/><path d="M0 6.6 L2.6 4.2 L2.8 5.3 L5.6 5.1 L5.8 7.9 L2.9 8.1 L3 9 Z" fill="#7ccc1c"/></svg>
<div class="t" style="left:364.05px;top:348.0px;font-size:6.4px;color:#1c3a5c;-webkit-text-stroke:0.15px currentColor;">Digital[ 6 ]</div>
<div class="a" style="left:312px;top:360px;width:4px;height:4px;background:#fff;border:1px solid #6a6a6a;box-sizing:border-box;"></div>
<svg style="left:317px;top:357.5px" width="9" height="9" viewBox="0 0 9 9"><path d="M0.2 0.9 L7.3 0.2 L7.4 9.2 L0.4 7.6 Z" fill="#e9462a"/><path d="M0.5 1.2 L7 0.6 L7 4.2 L0.6 4.6 Z" fill="#f77a5c"/><rect x="2.3" y="2.6" width="2.4" height="3.8" rx="1" fill="none" stroke="#fde0d0" stroke-width="0.9"/></svg>
<div class="t" style="left:327px;top:357.0px;font-size:6.4px;color:#0e2236;letter-spacing:0px;">Digital</div>
<div class="a" style="left:430px;top:360px;width:4px;height:4px;background:#fff;border:1px solid #6a6a6a;box-sizing:border-box;"></div>
<svg style="left:420.5px;top:357.5px" width="9" height="9" viewBox="0 0 9 9"><path d="M0.2 0.9 L7.3 0.2 L7.4 9.2 L0.4 7.6 Z" fill="#e9462a"/><path d="M0.5 1.2 L7 0.6 L7 4.2 L0.6 4.6 Z" fill="#f77a5c"/><rect x="2.3" y="2.6" width="2.4" height="3.8" rx="1" fill="none" stroke="#fde0d0" stroke-width="0.9"/></svg>
<div class="t" style="right:328.5px;top:357.0px;font-size:6.4px;color:#0e2236;">Out</div>
<div class="a" style="left:312px;top:368.4px;width:4px;height:4px;background:#fff;border:1px solid #6a6a6a;box-sizing:border-box;"></div>
<svg style="left:318px;top:366.9px" width="8" height="8" viewBox="0 0 8 8"><path d="M0.3 7.5 C0 5 1 2.5 1.5 0.3 C2.5 2 3 3 3.6 3.2 C4 2.4 4.3 2 4.8 1.8 C5.2 3 6.5 4 6.8 7.5 Z" fill="#e8281a"/><path d="M0.6 7.5 C0.8 6 1.4 5 2 4.4 C2.8 5.2 3.4 5.5 4 5 C4.8 5.5 6 6 6.5 7.5 Z" fill="#f8a020"/><path d="M1.2 7.8 C1.6 6.8 2.4 6.4 3.4 6.6 C4.4 6.4 5.4 6.8 6 7.8 Z" fill="#fde050"/></svg>
<div class="t" style="left:327px;top:365.4px;font-size:6.4px;color:#0e2236;letter-spacing:-0.15px;">Analog (PWM)</div>
<svg style="left:353.55px;top:375.5px" width="10" height="9" viewBox="0 0 10 9"><path d="M0.5 1.5 L6.5 0.8 L6.8 8.8 L0.8 8 Z" fill="#e9462a"/><path d="M0.8 1.8 L6.2 1.2 L6.3 4.5 L1 4.8 Z" fill="#f77a5c"/><path d="M4.2 1.8 L6.6 1.8 L6.6 0.2 L9.6 2.8 L6.6 5.4 L6.6 3.8 L4.2 3.8 Z" fill="#2458c8"/></svg>
<div class="t" style="left:364.05px;top:375.0px;font-size:6.4px;color:#1c3a5c;-webkit-text-stroke:0.15px currentColor;">Digital[ 7 ]</div>
<div class="a" style="left:312px;top:386.8px;width:4px;height:4px;background:#b4c8c8;border:1px solid #7a8a8a;box-sizing:border-box;"></div>
<svg style="left:317px;top:384.3px" width="9" height="9" viewBox="0 0 9 9"><path d="M0.2 0.9 L7.3 0.2 L7.4 9.2 L0.4 7.6 Z" fill="#e9462a"/><path d="M0.5 1.2 L7 0.6 L7 4.2 L0.6 4.6 Z" fill="#f77a5c"/><rect x="2.3" y="2.6" width="2.4" height="3.8" rx="1" fill="none" stroke="#fde0d0" stroke-width="0.9"/><path d="M3.2 1.4 Q4.6 0.4 6.4 0.8 L6.4 -0.6 L9.8 2.5 L6.4 5.6 L6.4 4.2 Q4.4 4.4 3.2 3.8 Z" fill="#1f4fc4"/><path d="M4 1.6 Q5.2 1 6.8 1.4 L6.8 0.6 L8.6 2.3 L4.2 2.6 Z" fill="#5f9af4"/></svg>
<div class="t" style="left:327px;top:383.8px;font-size:6.4px;color:#0e2236;letter-spacing:0px;">Digital</div>
<div class="a" style="left:430px;top:386.8px;width:4px;height:4px;background:#fff;border:1px solid #6a6a6a;box-sizing:border-box;"></div>
<svg style="left:420.5px;top:384.3px" width="9" height="9" viewBox="0 0 9 9"><path d="M0.2 0.9 L7.3 0.2 L7.4 9.2 L0.4 7.6 Z" fill="#e9462a"/><path d="M0.5 1.2 L7 0.6 L7 4.2 L0.6 4.6 Z" fill="#f77a5c"/><rect x="2.3" y="2.6" width="2.4" height="3.8" rx="1" fill="none" stroke="#fde0d0" stroke-width="0.9"/></svg>
<div class="t" style="right:328.5px;top:383.8px;font-size:6.4px;color:#0e2236;">Out</div>
<svg style="left:353.55px;top:393.5px" width="10" height="9" viewBox="0 0 10 9"><path d="M0.5 1.5 L6.5 0.8 L6.8 8.8 L0.8 8 Z" fill="#e9462a"/><path d="M0.8 1.8 L6.2 1.2 L6.3 4.5 L1 4.8 Z" fill="#f77a5c"/><path d="M4.2 1.8 L6.6 1.8 L6.6 0.2 L9.6 2.8 L6.6 5.4 L6.6 3.8 L4.2 3.8 Z" fill="#2458c8"/></svg>
<div class="t" style="left:364.05px;top:393.0px;font-size:6.4px;color:#1c3a5c;-webkit-text-stroke:0.15px currentColor;">Digital[ 8 ]</div>
<div class="a" style="left:312px;top:405px;width:4px;height:4px;background:#b4c8c8;border:1px solid #7a8a8a;box-sizing:border-box;"></div>
<svg style="left:317px;top:402.5px" width="9" height="9" viewBox="0 0 9 9"><path d="M0.2 0.9 L7.3 0.2 L7.4 9.2 L0.4 7.6 Z" fill="#e9462a"/><path d="M0.5 1.2 L7 0.6 L7 4.2 L0.6 4.6 Z" fill="#f77a5c"/><rect x="2.3" y="2.6" width="2.4" height="3.8" rx="1" fill="none" stroke="#fde0d0" stroke-width="0.9"/><path d="M3.2 1.4 Q4.6 0.4 6.4 0.8 L6.4 -0.6 L9.8 2.5 L6.4 5.6 L6.4 4.2 Q4.4 4.4 3.2 3.8 Z" fill="#1f4fc4"/><path d="M4 1.6 Q5.2 1 6.8 1.4 L6.8 0.6 L8.6 2.3 L4.2 2.6 Z" fill="#5f9af4"/></svg>
<div class="t" style="left:327px;top:402.0px;font-size:6.4px;color:#0e2236;letter-spacing:0px;">Digital</div>
<div class="a" style="left:430px;top:405px;width:4px;height:4px;background:#fff;border:1px solid #6a6a6a;box-sizing:border-box;"></div>
<svg style="left:420.5px;top:402.5px" width="9" height="9" viewBox="0 0 9 9"><path d="M0.2 0.9 L7.3 0.2 L7.4 9.2 L0.4 7.6 Z" fill="#e9462a"/><path d="M0.5 1.2 L7 0.6 L7 4.2 L0.6 4.6 Z" fill="#f77a5c"/><rect x="2.3" y="2.6" width="2.4" height="3.8" rx="1" fill="none" stroke="#fde0d0" stroke-width="0.9"/></svg>
<div class="t" style="right:328.5px;top:402.0px;font-size:6.4px;color:#0e2236;">Out</div>
<svg style="left:353.55px;top:411.5px" width="10" height="9" viewBox="0 0 10 9"><path d="M1.8 0.3 L8.8 1.2 L9.2 8.8 L2.2 8 Z" fill="#e8402a"/><path d="M2 0.6 L6 1.2 L6.2 7.5 L2.2 7 Z" fill="#f58a78"/><path d="M4 2.5 h1.6 v3.6 h-1.6 z" fill="none" stroke="#fde0d8" stroke-width="0.8"/><path d="M0 6.6 L2.6 4.2 L2.8 5.3 L5.6 5.1 L5.8 7.9 L2.9 8.1 L3 9 Z" fill="#7ccc1c"/></svg>
<div class="t" style="left:364.05px;top:411.0px;font-size:6.4px;color:#1c3a5c;-webkit-text-stroke:0.15px currentColor;">Digital[ 9 ]</div>
<div class="a" style="left:312px;top:423px;width:4px;height:4px;background:#fff;border:1px solid #6a6a6a;box-sizing:border-box;"></div>
<svg style="left:317px;top:420.5px" width="9" height="9" viewBox="0 0 9 9"><path d="M0.2 0.9 L7.3 0.2 L7.4 9.2 L0.4 7.6 Z" fill="#e9462a"/><path d="M0.5 1.2 L7 0.6 L7 4.2 L0.6 4.6 Z" fill="#f77a5c"/><rect x="2.3" y="2.6" width="2.4" height="3.8" rx="1" fill="none" stroke="#fde0d0" stroke-width="0.9"/></svg>
<div class="t" style="left:327px;top:420.0px;font-size:6.4px;color:#0e2236;letter-spacing:0px;">Digital</div>
<div class="a" style="left:430px;top:423px;width:4px;height:4px;background:#fff;border:1px solid #6a6a6a;box-sizing:border-box;"></div>
<svg style="left:420.5px;top:420.5px" width="9" height="9" viewBox="0 0 9 9"><path d="M0.2 0.9 L7.3 0.2 L7.4 9.2 L0.4 7.6 Z" fill="#e9462a"/><path d="M0.5 1.2 L7 0.6 L7 4.2 L0.6 4.6 Z" fill="#f77a5c"/><rect x="2.3" y="2.6" width="2.4" height="3.8" rx="1" fill="none" stroke="#fde0d0" stroke-width="0.9"/></svg>
<div class="t" style="right:328.5px;top:420.0px;font-size:6.4px;color:#0e2236;">Out</div>
<div class="a" style="left:312px;top:431.5px;width:4px;height:4px;background:#fff;border:1px solid #6a6a6a;box-sizing:border-box;"></div>
<svg style="left:318px;top:430.0px" width="8" height="8" viewBox="0 0 8 8"><path d="M0.3 7.5 C0 5 1 2.5 1.5 0.3 C2.5 2 3 3 3.6 3.2 C4 2.4 4.3 2 4.8 1.8 C5.2 3 6.5 4 6.8 7.5 Z" fill="#e8281a"/><path d="M0.6 7.5 C0.8 6 1.4 5 2 4.4 C2.8 5.2 3.4 5.5 4 5 C4.8 5.5 6 6 6.5 7.5 Z" fill="#f8a020"/><path d="M1.2 7.8 C1.6 6.8 2.4 6.4 3.4 6.6 C4.4 6.4 5.4 6.8 6 7.8 Z" fill="#fde050"/></svg>
<div class="t" style="left:327px;top:428.5px;font-size:6.4px;color:#0e2236;letter-spacing:-0.15px;">Analog (PWM)</div>
<svg style="left:351.55px;top:438.8px" width="10" height="9" viewBox="0 0 10 9"><path d="M1.8 0.3 L8.8 1.2 L9.2 8.8 L2.2 8 Z" fill="#e8402a"/><path d="M2 0.6 L6 1.2 L6.2 7.5 L2.2 7 Z" fill="#f58a78"/><path d="M4 2.5 h1.6 v3.6 h-1.6 z" fill="none" stroke="#fde0d8" stroke-width="0.8"/><path d="M0 6.6 L2.6 4.2 L2.8 5.3 L5.6 5.1 L5.8 7.9 L2.9 8.1 L3 9 Z" fill="#7ccc1c"/></svg>
<div class="t" style="left:362.05px;top:438.3px;font-size:6.4px;color:#1c3a5c;-webkit-text-stroke:0.15px currentColor;">Digital[ 10 ]</div>
<div class="a" style="left:312px;top:450px;width:4px;height:4px;background:#fff;border:1px solid #6a6a6a;box-sizing:border-box;"></div>
<svg style="left:317px;top:447.5px" width="9" height="9" viewBox="0 0 9 9"><path d="M0.2 0.9 L7.3 0.2 L7.4 9.2 L0.4 7.6 Z" fill="#e9462a"/><path d="M0.5 1.2 L7 0.6 L7 4.2 L0.6 4.6 Z" fill="#f77a5c"/><rect x="2.3" y="2.6" width="2.4" height="3.8" rx="1" fill="none" stroke="#fde0d0" stroke-width="0.9"/></svg>
<div class="t" style="left:327px;top:447.0px;font-size:6.4px;color:#0e2236;letter-spacing:0px;">Digital</div>
<div class="a" style="left:430px;top:450px;width:4px;height:4px;background:#fff;border:1px solid #6a6a6a;box-sizing:border-box;"></div>
<svg style="left:420.5px;top:447.5px" width="9" height="9" viewBox="0 0 9 9"><path d="M0.2 0.9 L7.3 0.2 L7.4 9.2 L0.4 7.6 Z" fill="#e9462a"/><path d="M0.5 1.2 L7 0.6 L7 4.2 L0.6 4.6 Z" fill="#f77a5c"/><rect x="2.3" y="2.6" width="2.4" height="3.8" rx="1" fill="none" stroke="#fde0d0" stroke-width="0.9"/></svg>
<div class="t" style="right:328.5px;top:447.0px;font-size:6.4px;color:#0e2236;">Out</div>
<div class="a" style="left:312px;top:458.5px;width:4px;height:4px;background:#fff;border:1px solid #6a6a6a;box-sizing:border-box;"></div>
<svg style="left:318px;top:457.0px" width="8" height="8" viewBox="0 0 8 8"><path d="M0.3 7.5 C0 5 1 2.5 1.5 0.3 C2.5 2 3 3 3.6 3.2 C4 2.4 4.3 2 4.8 1.8 C5.2 3 6.5 4 6.8 7.5 Z" fill="#e8281a"/><path d="M0.6 7.5 C0.8 6 1.4 5 2 4.4 C2.8 5.2 3.4 5.5 4 5 C4.8 5.5 6 6 6.5 7.5 Z" fill="#f8a020"/><path d="M1.2 7.8 C1.6 6.8 2.4 6.4 3.4 6.6 C4.4 6.4 5.4 6.8 6 7.8 Z" fill="#fde050"/></svg>
<div class="t" style="left:327px;top:455.5px;font-size:6.4px;color:#0e2236;letter-spacing:-0.15px;">Analog (PWM)</div>
<svg style="left:335.3px;top:465.5px" width="10" height="9" viewBox="0 0 10 9"><path d="M1.8 0.3 L8.8 1.2 L9.2 8.8 L2.2 8 Z" fill="#e8402a"/><path d="M2 0.6 L6 1.2 L6.2 7.5 L2.2 7 Z" fill="#f58a78"/><path d="M4 2.5 h1.6 v3.6 h-1.6 z" fill="none" stroke="#fde0d8" stroke-width="0.8"/><path d="M0 6.6 L2.6 4.2 L2.8 5.3 L5.6 5.1 L5.8 7.9 L2.9 8.1 L3 9 Z" fill="#7ccc1c"/></svg>
<div class="t" style="left:345.8px;top:465.0px;font-size:6.4px;color:#1c3a5c;-webkit-text-stroke:0.15px currentColor;">Digital(SPI-MOSI)[ 11 ]</div>
<div class="a" style="left:312px;top:476.8px;width:4px;height:4px;background:#fff;border:1px solid #6a6a6a;box-sizing:border-box;"></div>
<svg style="left:317px;top:474.3px" width="9" height="9" viewBox="0 0 9 9"><path d="M0.2 0.9 L7.3 0.2 L7.4 9.2 L0.4 7.6 Z" fill="#e9462a"/><path d="M0.5 1.2 L7 0.6 L7 4.2 L0.6 4.6 Z" fill="#f77a5c"/><rect x="2.3" y="2.6" width="2.4" height="3.8" rx="1" fill="none" stroke="#fde0d0" stroke-width="0.9"/></svg>
<div class="t" style="left:327px;top:473.8px;font-size:6.4px;color:#0e2236;letter-spacing:0px;">Digital</div>
<div class="a" style="left:430px;top:476.8px;width:4px;height:4px;background:#fff;border:1px solid #6a6a6a;box-sizing:border-box;"></div>
<svg style="left:420.5px;top:474.3px" width="9" height="9" viewBox="0 0 9 9"><path d="M0.2 0.9 L7.3 0.2 L7.4 9.2 L0.4 7.6 Z" fill="#e9462a"/><path d="M0.5 1.2 L7 0.6 L7 4.2 L0.6 4.6 Z" fill="#f77a5c"/><rect x="2.3" y="2.6" width="2.4" height="3.8" rx="1" fill="none" stroke="#fde0d0" stroke-width="0.9"/></svg>
<div class="t" style="right:328.5px;top:473.8px;font-size:6.4px;color:#0e2236;">Out</div>
<div class="a" style="left:312px;top:485.4px;width:4px;height:4px;background:#fff;border:1px solid #6a6a6a;box-sizing:border-box;"></div>
<svg style="left:318px;top:483.9px" width="8" height="8" viewBox="0 0 8 8"><path d="M0.3 7.5 C0 5 1 2.5 1.5 0.3 C2.5 2 3 3 3.6 3.2 C4 2.4 4.3 2 4.8 1.8 C5.2 3 6.5 4 6.8 7.5 Z" fill="#e8281a"/><path d="M0.6 7.5 C0.8 6 1.4 5 2 4.4 C2.8 5.2 3.4 5.5 4 5 C4.8 5.5 6 6 6.5 7.5 Z" fill="#f8a020"/><path d="M1.2 7.8 C1.6 6.8 2.4 6.4 3.4 6.6 C4.4 6.4 5.4 6.8 6 7.8 Z" fill="#fde050"/></svg>
<div class="t" style="left:327px;top:482.4px;font-size:6.4px;color:#0e2236;letter-spacing:-0.15px;">Analog (PWM)</div>
<svg style="left:335.05px;top:492.5px" width="10" height="9" viewBox="0 0 10 9"><path d="M1.8 0.3 L8.8 1.2 L9.2 8.8 L2.2 8 Z" fill="#e8402a"/><path d="M2 0.6 L6 1.2 L6.2 7.5 L2.2 7 Z" fill="#f58a78"/><path d="M4 2.5 h1.6 v3.6 h-1.6 z" fill="none" stroke="#fde0d8" stroke-width="0.8"/><path d="M0 6.6 L2.6 4.2 L2.8 5.3 L5.6 5.1 L5.8 7.9 L2.9 8.1 L3 9 Z" fill="#7ccc1c"/></svg>
<div class="t" style="left:345.55px;top:492.0px;font-size:6.4px;color:#1c3a5c;-webkit-text-stroke:0.15px currentColor;">Digital(SPI-MISO)[ 12 ]</div>
<div class="a" style="left:312px;top:502.5px;width:4px;height:4px;background:#fff;border:1px solid #6a6a6a;box-sizing:border-box;"></div>
<svg style="left:317px;top:500.0px" width="9" height="9" viewBox="0 0 9 9"><path d="M0.2 0.9 L7.3 0.2 L7.4 9.2 L0.4 7.6 Z" fill="#e9462a"/><path d="M0.5 1.2 L7 0.6 L7 4.2 L0.6 4.6 Z" fill="#f77a5c"/><rect x="2.3" y="2.6" width="2.4" height="3.8" rx="1" fill="none" stroke="#fde0d0" stroke-width="0.9"/></svg>
<div class="t" style="left:327px;top:499.5px;font-size:6.4px;color:#0e2236;letter-spacing:0px;">Digital</div>
<div class="a" style="left:430px;top:502.5px;width:4px;height:4px;background:#fff;border:1px solid #6a6a6a;box-sizing:border-box;"></div>
<svg style="left:420.5px;top:500.0px" width="9" height="9" viewBox="0 0 9 9"><path d="M0.2 0.9 L7.3 0.2 L7.4 9.2 L0.4 7.6 Z" fill="#e9462a"/><path d="M0.5 1.2 L7 0.6 L7 4.2 L0.6 4.6 Z" fill="#f77a5c"/><rect x="2.3" y="2.6" width="2.4" height="3.8" rx="1" fill="none" stroke="#fde0d0" stroke-width="0.9"/></svg>
<div class="t" style="right:328.5px;top:499.5px;font-size:6.4px;color:#0e2236;">Out</div>
<svg style="left:328.3px;top:509.5px" width="10" height="9" viewBox="0 0 10 9"><path d="M1.8 0.3 L8.8 1.2 L9.2 8.8 L2.2 8 Z" fill="#e8402a"/><path d="M2 0.6 L6 1.2 L6.2 7.5 L2.2 7 Z" fill="#f58a78"/><path d="M4 2.5 h1.6 v3.6 h-1.6 z" fill="none" stroke="#fde0d8" stroke-width="0.8"/><path d="M0 6.6 L2.6 4.2 L2.8 5.3 L5.6 5.1 L5.8 7.9 L2.9 8.1 L3 9 Z" fill="#7ccc1c"/></svg>
<div class="t" style="left:338.8px;top:509.0px;font-size:6.4px;color:#1c3a5c;-webkit-text-stroke:0.15px currentColor;">Digital(LED)(SPI-SCK)[ 13 ]</div>
<div class="a" style="left:161px;top:371px;width:64px;height:63px;background:#b4c6df;border:1px solid #6b7b8e;border-radius:3px;box-sizing:border-box;"></div>
<div class="a" style="left:161px;top:371px;width:64px;height:13px;background:linear-gradient(#fcd2bf 0%,#fbbfa4 40%,#f89c76 60%,#f7a27c 100%);border:1px solid #86685c;border-bottom:1px solid #7a5a4c;border-radius:3px 3px 0 0;box-sizing:border-box;"></div>
<svg style="left:163px;top:373px" width="9" height="8" viewBox="0 0 9 8"><path d="M1 4 L4 1 L8 2 L7 7 L3 7 Z" fill="#9aa0a8"/><path d="M2.5 4 L5 2.5" stroke="#e8e8e8" stroke-width="1"/></svg>
<div class="t" style="left:175.5px;top:372.0px;font-size:6.1px;color:#2e140a;font-weight:bold;-webkit-text-stroke:0.12px currentColor;">SoftwareSerial1</div>
<div class="a" style="left:187px;top:385px;width:37px;height:26px;background:#87cefa;border:1px solid #5a84a8;border-right:none;border-radius:3px 0 0 3px;box-sizing:border-box;"></div>
<div class="t" style="left:188.8px;top:384.5px;font-size:6.2px;color:#245080;-webkit-text-stroke:0.15px currentColor;">Control</div>
<div class="a" style="left:160px;top:387.5px;width:4px;height:4px;background:#fff;border:1px solid #6a6a6a;box-sizing:border-box;"></div>
<svg style="left:165px;top:385px" width="7" height="9" viewBox="0 0 7 9"><rect x="0.5" y="0.5" width="6" height="8" rx="0.8" fill="#f4f4ee" stroke="#a8aca8" stroke-width="0.8"/><path d="M2.6 2 V7 M4.4 2 V7" stroke="#b8b8b0" stroke-width="0.7"/></svg>
<div class="t" style="left:174.5px;top:384.5px;font-size:6.4px;color:#0e2236;">In</div>
<div class="a" style="left:222px;top:395.5px;width:4px;height:4px;background:#b4c8c8;border:1px solid #7a8a8a;box-sizing:border-box;"></div>
<svg style="left:213.5px;top:393.0px" width="9" height="9" viewBox="0 0 9 9"><path d="M0.2 0.9 L7.3 0.2 L7.4 9.2 L0.4 7.6 Z" fill="#e9462a"/><path d="M0.5 1.2 L7 0.6 L7 4.2 L0.6 4.6 Z" fill="#f77a5c"/><rect x="2.3" y="2.6" width="2.4" height="3.8" rx="1" fill="none" stroke="#fde0d0" stroke-width="0.9"/><path d="M3.2 1.4 Q4.6 0.4 6.4 0.8 L6.4 -0.6 L9.8 2.5 L6.4 5.6 L6.4 4.2 Q4.4 4.4 3.2 3.8 Z" fill="#1f4fc4"/><path d="M4 1.6 Q5.2 1 6.8 1.4 L6.8 0.6 L8.6 2.3 L4.2 2.6 Z" fill="#5f9af4"/></svg>
<div class="t" style="right:535.5px;top:392.5px;font-size:6.4px;color:#0e2236;">RX</div>
<div class="a" style="left:222px;top:404.8px;width:4px;height:4px;background:#b4c8c8;border:1px solid #7a8a8a;box-sizing:border-box;"></div>
<svg style="left:213.5px;top:402.3px" width="9" height="9" viewBox="0 0 9 9"><path d="M0.2 0.9 L7.3 0.2 L7.4 9.2 L0.4 7.6 Z" fill="#e9462a"/><path d="M0.5 1.2 L7 0.6 L7 4.2 L0.6 4.6 Z" fill="#f77a5c"/><rect x="2.3" y="2.6" width="2.4" height="3.8" rx="1" fill="none" stroke="#fde0d0" stroke-width="0.9"/><path d="M3.2 1.4 Q4.6 0.4 6.4 0.8 L6.4 -0.6 L9.8 2.5 L6.4 5.6 L6.4 4.2 Q4.4 4.4 3.2 3.8 Z" fill="#1f4fc4"/><path d="M4 1.6 Q5.2 1 6.8 1.4 L6.8 0.6 L8.6 2.3 L4.2 2.6 Z" fill="#5f9af4"/></svg>
<div class="t" style="right:535.5px;top:401.8px;font-size:6.4px;color:#0e2236;">TX</div>
<div class="a" style="left:222px;top:413.9px;width:4px;height:4px;background:#fff;border:1px solid #6a6a6a;box-sizing:border-box;"></div>
<svg style="left:214px;top:411.4px" width="7" height="9" viewBox="0 0 7 9"><rect x="0.5" y="0.5" width="6" height="8" rx="0.8" fill="#f4f4ee" stroke="#a8aca8" stroke-width="0.8"/><path d="M2.6 2 V7 M4.4 2 V7" stroke="#b8b8b0" stroke-width="0.7"/></svg>
<div class="t" style="right:535.5px;top:410.9px;font-size:6.4px;color:#0e2236;">Out</div>
<div class="a" style="left:222px;top:422.8px;width:4px;height:4px;background:#fff;border:1px solid #6a6a6a;box-sizing:border-box;"></div>
<svg style="left:213.5px;top:420.3px" width="9" height="9" viewBox="0 0 9 9"><path d="M0.2 0.9 L7.3 0.2 L7.4 9.2 L0.4 7.6 Z" fill="#e9462a"/><path d="M0.5 1.2 L7 0.6 L7 4.2 L0.6 4.6 Z" fill="#f77a5c"/><rect x="2.3" y="2.6" width="2.4" height="3.8" rx="1" fill="none" stroke="#fde0d0" stroke-width="0.9"/></svg>
<div class="t" style="right:535.5px;top:419.8px;font-size:6.4px;color:#0e2236;">Sending</div>
<div class="a" style="left:0px;top:517px;width:748px;height:14px;background:#f0f0f0;"></div>
<div class="a" style="left:2px;top:518px;width:744px;height:1px;background:#e4e4e4;"></div>
<div class="a" style="left:41px;top:519px;width:1px;height:10px;background:#d8d8d8;"></div>
<div class="a" style="left:0px;top:529px;width:748px;height:2px;background:#fafafa;"></div>
<div class="a" style="left:745px;top:518px;width:1px;height:11px;background:#fafafa;"></div>
</body></html>
